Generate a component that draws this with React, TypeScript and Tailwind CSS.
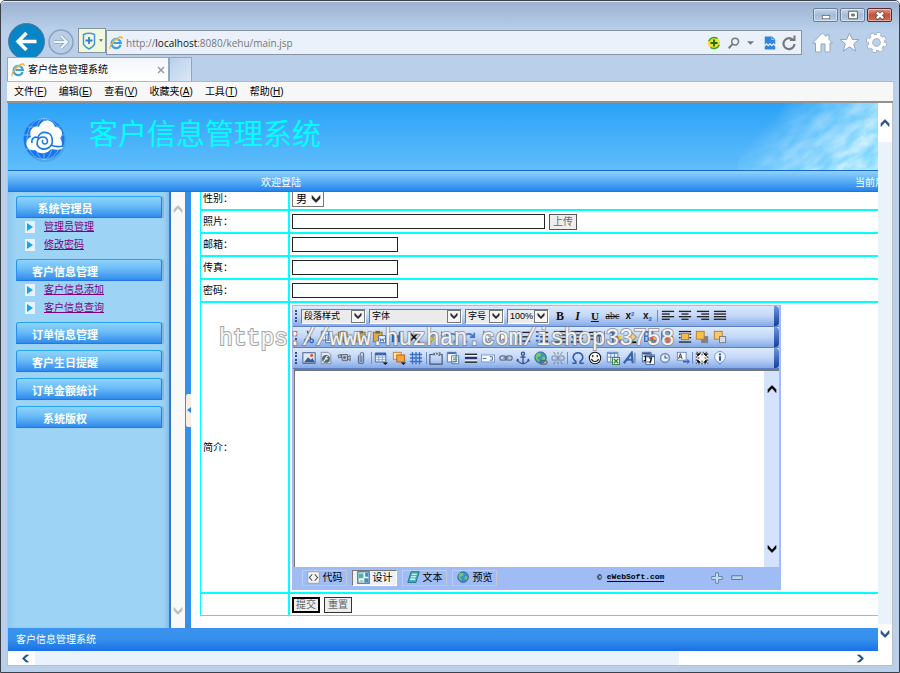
import React from "react";

type Kids = { children?: React.ReactNode };

const Svg = ({ children, className = "size-[14px]" }: Kids & { className?: string }) => (
  <svg viewBox="0 0 16 16" fill="none" className={className} aria-hidden="true">
    {children}
  </svg>
);

const Chevron = ({ dir, className }: { dir: "up" | "down" | "left" | "right"; className: string }) => {
  const d = {
    up: "M1 8.500L5 4L9 8.500V5.500L5 1.500L1 5.500Z",
    down: "M1 1.500L5 6L9 1.500V4.500L5 8.500L1 4.500Z",
    left: "M8.500 1L4 5L8.500 9H5.500L1.500 5L5.500 1Z",
    right: "M1.500 1L6 5L1.500 9H4.500L8.500 5L4.500 1Z",
  }[dir];
  return (
    <svg viewBox="0 0 10 10" className={className} aria-hidden="true">
      <path d={d} fill="currentColor" stroke="currentColor" strokeWidth=".6" />
    </svg>
  );
};

const IELogo = () => (
  <Svg className="size-[14px] shrink-0">
    <path d="M13.300 10.200A5.300 5.300 0 1 1 13.500 8H5" stroke="#3d9fdf" strokeWidth="2.500" />
    <path d="M11.500 4.500A5 5 0 0 0 3.500 7" stroke="#8ad3f7" strokeWidth="1" />
    <path d="M1.500 15C-.5 12.500 5 5.500 10 2.500c3-1.800 5.500-2 4.800.8" stroke="#f0b52c" strokeWidth="1.500" />
  </Svg>
);

/* ---------- toolbar drawings ---------- */
const lines = (a: number[][]) =>
  a.map(([x, y, w], i) => <rect key={i} x={x} y={y} width={w} height="1.500" fill="#222" />);

const clip = (
  <>
    <rect x="1.500" y="2.500" width="10" height="11" fill="#e0ab3c" stroke="#8d6a20" />
    <rect x="4" y="1" width="5" height="3" fill="#666" />
  </>
);
const cursor = <path d="M4 1v12l3-3 2 5 2-1-2-4h4z" fill="#fff" stroke="#6d7c99" />;
const palette = (
  <>
    <rect x="8" y="7" width="4" height="4" fill="#e64e3c" />
    <rect x="12" y="7" width="3" height="4" fill="#efc531" />
    <rect x="8" y="11" width="4" height="4" fill="#43a047" />
    <rect x="12" y="11" width="3" height="4" fill="#d23bd0" />
  </>
);
const grid = <path d="M4 1v14M8 1v14M12 1v14M1 4h14M1 8h14M1 12h14" stroke="#3a6fc4" strokeWidth="1.500" />;
const chain = (
  <g stroke="#68758a" strokeWidth="1.500">
    <rect x="1" y="5.500" width="7" height="5" rx="2.500" />
    <rect x="8" y="5.500" width="7" height="5" rx="2.500" />
    <path d="M5 8h6" />
  </g>
);
const globe = (
  <>
    <circle cx="7.500" cy="7.500" r="6.500" fill="#3f8fd0" stroke="#27598f" />
    <path d="M3 3c3-2 6 0 5 2s-4 1-4 3 3 2 2 4C2 11 1 6 3 3zM10 6l3 1-1 4-3-2z" fill="#6ccf5c" />
  </>
);

type Tool = [string, React.ReactNode] | null;

const row1: Tool[] = [
  ["加粗", <b className="font-['Liberation_Serif',serif] text-[12px] font-black">B</b>],
  ["斜体", <b className="font-['Liberation_Serif',serif] text-[12px] italic">I</b>],
  ["下划线", <b className="font-['Liberation_Serif',serif] text-[11px] underline">U</b>],
  ["删除线", <span className="font-['Liberation_Serif',serif] text-[10px] line-through">abc</span>],
  ["上标", <b className="text-[10px]">x<sup className="text-[6px] text-[#2c5fc0]">2</sup></b>],
  ["下标", <b className="text-[10px]">x<sub className="text-[6px] text-[#2c5fc0]">2</sub></b>],
  null,
  ["左对齐", <Svg>{lines([[1, 2, 14], [1, 5, 9], [1, 8, 14], [1, 11, 9]])}</Svg>],
  ["居中", <Svg>{lines([[1, 2, 14], [4, 5, 8], [1, 8, 14], [4, 11, 8]])}</Svg>],
  ["右对齐", <Svg>{lines([[1, 2, 14], [6, 5, 9], [1, 8, 14], [6, 11, 9]])}</Svg>],
  ["两端对齐", <Svg>{lines([[1, 2, 14], [1, 5, 14], [1, 8, 14], [1, 11, 14]])}</Svg>],
];

const row2: Tool[] = [
  ["剪切", <Svg><path d="M11 1L6 10M6 1l4 9" stroke="#444" strokeWidth="1.500" /><circle cx="5" cy="12.500" r="2" stroke="#2c5fc0" strokeWidth="1.500" /><circle cx="11" cy="12.500" r="2" stroke="#2c5fc0" strokeWidth="1.500" /></Svg>],
  ["复制", <Svg><path d="M1.500 1.500h8v10h-8zM6.500 5.500h8v9h-8z" fill="#fff" stroke="#3a63b0" /><path d="M8 8h5M8 10h5M8 12h5" stroke="#5e86d0" /></Svg>],
  ["粘贴", <Svg>{clip}<path d="M7.500 7.500h7v7h-7z" fill="#fff" stroke="#3a63b0" /></Svg>],
  ["粘贴文本", <Svg>{clip}<path d="M7.500 7.500h7v7h-7z" fill="#fff" stroke="#3a63b0" /><path d="M9 10h4M11 10v4" stroke="#222" /></Svg>],
  ["从Word粘贴", <Svg>{clip}<path d="M7.500 6.500h8v8h-8z" fill="#fff" stroke="#2c5fc0" /><path d="M9 9l1 4 1.500-3 1.500 3 1-4" stroke="#2c5fc0" /></Svg>],
  ["查找", <Svg><path d="M2 6l2-4h2v4h4V2h2l2 4v8H9V9H7v5H2z" fill="#3c5da4" /></Svg>],
  ["删除", <Svg><path d="M2 2l12 12M14 2L2 14" stroke="#111" strokeWidth="2" /></Svg>],
  ["格式刷", <Svg><path d="M10 1l4 3-5 5-3-3z" fill="#8b97ac" /><path d="M6 6l4 4-4 5H2z" fill="#e9c446" stroke="#a98320" /></Svg>],
  null,
  ["撤消", <Svg><path d="M2 3v5h5M3 8c2-5 10-5 10 1 0 2-1 4-3 5" stroke="#4477cc" strokeWidth="2" /></Svg>],
  ["重做", <Svg><path d="M14 3v5H9M13 8C11 3 3 3 3 9c0 2 1 4 3 5" stroke="#4477cc" strokeWidth="2" /></Svg>],
  ["全选", <Svg>{cursor}</Svg>],
  ["取消选择", <Svg>{cursor}</Svg>],
  null,
  ["编号", <Svg>{lines([[6, 2, 9], [6, 7, 9], [6, 12, 9]])}<path d="M2 1v4M2 6v4M2 11v4" stroke="#2c5fc0" strokeWidth="1.500" /></Svg>],
  ["项目符号", <Svg>{lines([[6, 2, 9], [6, 7, 9], [6, 12, 9]])}<path d="M1 2h3M1 7h3M1 12h3" stroke="#2c5fc0" strokeWidth="2" /></Svg>],
  ["增加缩进", <Svg>{lines([[1, 1, 14], [7, 5, 8], [7, 9, 8], [1, 13, 14]])}<path d="M1 5l4 3-4 3z" fill="#2c5fc0" /></Svg>],
  ["减少缩进", <Svg>{lines([[1, 1, 14], [7, 5, 8], [7, 9, 8], [1, 13, 14]])}<path d="M5 5L1 8l4 3z" fill="#2c5fc0" /></Svg>],
  ["段落", <Svg>{lines([[1, 2, 14], [1, 6, 14], [1, 10, 6]])}<path d="M10 8v7M13 8v7" stroke="#2c5fc0" strokeWidth="1.500" /></Svg>],
  null,
  ["文字颜色", <Svg><path d="M1 3h9M5.500 3v11" stroke="#3c62a8" strokeWidth="2" />{palette}</Svg>],
  ["背景颜色", <Svg><path d="M2 7l5-5 6 6-5 5z" fill="#f0cf86" stroke="#84652c" /><path d="M3 14h10" stroke="#111" strokeWidth="2" /></Svg>],
  ["边框颜色", <Svg><path d="M2 2h9v11H2zM2 7h9M6 2v11" stroke="#3464bd" strokeWidth="1.500" />{palette}</Svg>],
  ["底纹", <Svg><rect x="2" y="2" width="9" height="9" fill="#7ea3df" stroke="#335a9d" /><rect x="7" y="7" width="8" height="8" fill="#d96c45" /></Svg>],
  ["文字环绕", <Svg>{lines([[1, 1, 14], [1, 4, 2], [13, 4, 2], [1, 8, 2], [13, 8, 2], [1, 13, 14]])}<rect x="4" y="4" width="8" height="7" fill="#f2bd4d" stroke="#a87b20" /></Svg>],
  ["上移一层", <Svg><rect x="7" y="7" width="8" height="8" fill="#7d828b" /><rect x="1.500" y="1.500" width="9" height="9" fill="#f6bf51" stroke="#ae7c1b" /></Svg>],
  ["下移一层", <Svg><rect x="1.500" y="1.500" width="9" height="9" fill="#f6c96d" stroke="#ae7c1b" /><rect x="7.500" y="7.500" width="7" height="7" fill="#d5dae4" stroke="#70757f" /></Svg>],
];

const row3: Tool[] = [
  ["图片", <Svg><rect x="1" y="2" width="14" height="12" fill="#dfe9f8" stroke="#34507e" /><path d="M2 13l5-6 3 3 2-2 3 5z" fill="#395b90" /><circle cx="11" cy="5" r="1.800" fill="#e05b35" /></Svg>],
  ["Flash", <Svg><path d="M2.500 1.500h8l3 3v10h-11z" fill="#e4e9f2" stroke="#77859b" /><circle cx="8" cy="9" r="4.500" fill="#536b72" /><path d="M10 6c-3 0-2 5-5 6M7 9h3" stroke="#fff" strokeWidth="1.300" /></Svg>],
  ["媒体", <Svg><path d="M1 5l3-1 1 3-3 1zM5 4h7v7H6zM12 7l3-2v6l-3-2" fill="#b7c0cd" stroke="#56606e" /><circle cx="8.500" cy="7.500" r="1.500" fill="#56606e" /></Svg>],
  ["附件", <Svg><path d="M5 5v7c0 3 6 3 6 0V4c0-3-4-3-4 0v7c0 1 2 1 2 0V5" stroke="#65748c" strokeWidth="1.300" /></Svg>],
  null,
  ["表格", <Svg><path d="M1.500 2.500h12v10h-12z" fill="#fff" stroke="#315da5" /><path d="M1.500 3.500h12" stroke="#315da5" strokeWidth="3" /><path d="M5.500 3v9M9.500 3v9M1.500 7h12M1.500 10h12" stroke="#7699d1" /><path d="M10 13h6l-3 3z" fill="#111" /></Svg>],
  ["图层", <Svg><rect x="1.500" y="1.500" width="9" height="8" fill="#ffe4a5" stroke="#c07d22" /><rect x="5.500" y="4.500" width="9" height="8" fill="#f5a53b" stroke="#b25c18" /><path d="M10 13h6l-3 3z" fill="#111" /></Svg>],
  ["显示网格", <Svg>{grid}</Svg>],
  null,
  ["字段集", <Svg><path d="M5 4H1v11h14V4h-2" stroke="#4b5669" strokeWidth="1.300" /><path d="M5 2l2 3M7 2L5 5M8 2l1 2 1-2M11 2h2l-2 3h2" stroke="#333" strokeWidth=".8" /></Svg>],
  ["网页", <Svg><path d="M1.500 1.500h10v11h-10zM6.500 5.500h8v9h-8z" fill="#fff" stroke="#416caf" /><path d="M2 2.500h9" stroke="#416caf" strokeWidth="2" /><path d="M8 8h5M8 10h5M8 12h5" stroke="#549b4d" strokeWidth="1.300" /></Svg>],
  ["水平线", <Svg>{lines([[1, 3, 14], [1, 12, 14]])}<rect x="1" y="5" width="14" height="6" fill="#fff" /><path d="M1 8h14" stroke="#292e75" strokeWidth="3" /></Svg>],
  ["换行", <Svg><rect x=".5" y="4.500" width="15" height="8" fill="#f6f9ff" stroke="#7890b9" /><path d="M2 8.500h4M10 6.500h3v4h-3" stroke="#315da5" /></Svg>],
  ["超链接", <Svg>{chain}</Svg>],
  ["锚点", <Svg><circle cx="8" cy="3" r="1.800" stroke="#314f8a" strokeWidth="1.500" /><path d="M8 5v9M5 7h6M2 9c0 7 12 7 12 0M2 9l-1 3M14 9l1 3" stroke="#314f8a" strokeWidth="1.500" /></Svg>],
  ["网络链接", <Svg>{globe}<rect x="7" y="11" width="8" height="4" rx="2" stroke="#566" strokeWidth="1.300" /></Svg>],
  ["取消链接", <Svg><g opacity=".6">{chain}</g><path d="M3 1l2 3M8 1v3M13 1l-2 3M3 15l2-3M8 15v-3M13 15l-2-3" stroke="#777" /></Svg>],
  null,
  ["特殊符号", <Svg><path d="M1.500 14h4v-2C0 8 3 2 8 2s8 6 2.500 10v2h4" stroke="#315da5" strokeWidth="1.800" /></Svg>],
  ["表情", <Svg><circle cx="8" cy="8" r="6.500" fill="#fff" stroke="#111" strokeWidth="1.200" /><path d="M4 9c1 4 7 4 8 0M5.500 4.500v2.500M10.500 4.500v2.500" stroke="#111" strokeWidth="1.300" /></Svg>],
  ["Excel", <Svg><path d="M1.500 1.500h12v11h-12z" fill="#fff" stroke="#4678c0" /><path d="M2 3h11M5.500 2v10M9.500 2v10M2 7h11" stroke="#4678c0" /><rect x="7.500" y="7.500" width="8" height="8" fill="#e8f7e3" stroke="#317b36" /><path d="M9 9l5 5M14 9l-5 5" stroke="#317b36" strokeWidth="1.500" /></Svg>],
  ["艺术字", <Svg><path d="M1 14L10 2l1 12M4 10h7" stroke="#3265ae" strokeWidth="2.500" /><path d="M13.500 2v12" stroke="#8199bf" strokeWidth="2" /></Svg>],
  ["日期", <Svg><path d="M1.500 1.500h10v11h-10zM5.500 4.500h10v11h-10z" fill="#fff" stroke="#3c5c91" /><path d="M2 3h9M6 6h9" stroke="#3c5c91" strokeWidth="2" /><path d="M9 8h3l-2 6M3 6h2v5H3" stroke="#111" strokeWidth="1.300" /></Svg>],
  ["时间", <Svg><circle cx="8" cy="8" r="5" fill="#eaf1fd" stroke="#7c94bc" strokeWidth="1.800" /><path d="M8 5v3h3" stroke="#315da5" strokeWidth="1.300" /></Svg>],
  ["自动替换", <Svg><rect x="1.500" y="1.500" width="10" height="9" fill="#fff" stroke="#5b7fba" /><path d="M3 9l2-6 2 6M4 7h2" stroke="#222" /><path d="M8 11h5v-2l3 3-3 3v-2H8z" fill="#3766b8" /></Svg>],
  null,
  ["全屏", <Svg><rect x="1.500" y="1.500" width="13" height="13" fill="#f4f5f7" stroke="#333" strokeDasharray="2 1.500" /><path d="M3 6V3h3zM10 3h3v3zM3 10v3h3zM13 10v3h-3zM8 3v2M8 11v2M3 8h2M11 8h2" fill="#111" stroke="#111" /></Svg>],
  ["关于", <Svg><path d="M8 .500a6.300 6.300 0 0 1 1 12.500L8 15.500l-1-2.500A6.300 6.300 0 0 1 8 .500z" fill="#eff6ff" stroke="#6c91be" /><path d="M8 6v5" stroke="#1e4d9b" strokeWidth="2.200" /><circle cx="8" cy="3.800" r="1.200" fill="#1e4d9b" /></Svg>],
];

const Tools = ({ items }: { items: Tool[] }) => (
  <div className="flex min-w-0 flex-1 items-center justify-between">
    {items.map((t, i) =>
      t === null ? (
        <span key={i} className="h-3 w-px bg-[#6a8ccb]" />
      ) : (
        <button key={i} type="button" aria-label={t[0]} className="flex h-4 w-4 shrink-0 items-center justify-center leading-none text-[#111]">
          {t[1]}
        </button>
      ),
    )}
  </div>
);

const Bar = ({ children }: Kids) => (
  <div className="flex h-[21px] w-[486px] border-b border-[#5d80c4] bg-linear-to-b from-[#dde9fd] via-[#c2d7f8] to-[#86aae6]">
    <div className="my-1 mr-1 ml-[2px] w-0 border-l-2 border-dotted border-[#2f4f94]" />
    <div className="flex w-[427px] items-center gap-[3px]">{children}</div>
    <div className="ml-auto w-[5px] rounded-r-sm bg-linear-to-b from-[#6f95dc] to-[#123f9b]" />
  </div>
);

const ToolSelect = ({ label, width }: { label: string; width: string }) => (
  <div className={`grid h-[15px] shrink-0 border border-[#777] border-r-white border-b-white bg-[#ebebeb] ${width}`}>
    <select aria-label={label} className="w-full appearance-none pl-[2px] text-[9px] leading-[13px] text-black [grid-area:1/1]">
      <option>{label}</option>
    </select>
    <span className="pointer-events-none flex w-[14px] items-center justify-center justify-self-end border border-[#777] bg-[#f5f5f5] [grid-area:1/1]">
      <Chevron dir="down" className="size-[8px] text-[#222]" />
    </span>
  </div>
);

/* ---------- sidebar ---------- */
const groups: { title: string; links: string[] }[] = [
  { title: "系统管理员", links: ["管理员管理", "修改密码"] },
  { title: "客户信息管理", links: ["客户信息添加", "客户信息查询"] },
  { title: "订单信息管理", links: [] },
  { title: "客户生日提醒", links: [] },
  { title: "订单金额统计", links: [] },
  { title: "系统版权", links: [] },
];

const Sidebar = () => (
  <nav className="flex w-[163px] shrink-0 flex-col gap-[6px] border-r-2 border-[#2f7ccb] bg-linear-to-r from-[#8fc8f0] via-[#9dd3f5] via-5% to-[#9dd3f5] pt-1 pl-2 shadow-[inset_-4px_0_4px_-2px_#7fb8e0]">
    {groups.map((g) => (
      <div key={g.title}>
        <button
          type="button"
          className="block h-[22px] w-[146px] rounded-t-[3px] border border-t-[#23a5f0] border-r-[#2583e2] border-b-[#1f78e6] border-l-[#2a8ff0] bg-linear-to-b from-[#8fd3fb] via-[#6abcf7] via-45% to-[#2f8aec] pt-[4px] pr-12 text-center text-[11px] leading-4 font-bold text-white shadow-[2px_0_1px_#84b4dc]"
        >
          {g.title}
        </button>
        {g.links.length > 0 && (
          <ul className="-mb-px">
            {g.links.map((l) => (
              <li key={l} className="flex h-[18px] items-center gap-[9px] pl-[9px]">
                <span className="flex h-3 w-[10px] items-center justify-center bg-[#e6f3fb]">
                  <svg viewBox="0 0 6 8" className="h-2 w-[6px]" aria-hidden="true"><path d="M0 0l6 4-6 4z" fill="#1aa5e8" /></svg>
                </span>
                <a href="#" className="text-[10px] leading-3 text-[#800080] underline">{l}</a>
              </li>
            ))}
          </ul>
        )}
      </div>
    ))}
  </nav>
);

/* ---------- form ---------- */
const Row = ({ label, id, children, className }: Kids & { label?: string; id?: string; className: string }) => (
  <div className={`flex border-[#00ffff] ${className}`}>
    <div className="flex w-[89px] shrink-0 items-center border-r-2 border-[#00ffff] pl-[2px]">
      {label && <label htmlFor={id} className="text-[10px] leading-3">{label}</label>}
    </div>
    <div className="flex min-w-0 flex-1 items-center gap-1 pl-[2px]">{children}</div>
  </div>
);

const TextBox = ({ id, type = "text" }: { id: string; type?: string }) => (
  <input id={id} type={type} className="h-[15px] w-[106px] border border-[#222] bg-white px-1 text-[10px]" />
);

const Editor = () => (
  <div className="w-[489px] bg-[#a0bcf4] px-px">
    <div className="flex flex-col pt-px">
      <Bar>
        <ToolSelect label="段落样式" width="w-[65px]" />
        <ToolSelect label="字体" width="w-[93px]" />
        <ToolSelect label="字号" width="w-[39px]" />
        <ToolSelect label="100%" width="w-[42px]" />
        <Tools items={row1} />
      </Bar>
      <Bar><Tools items={row2} /></Bar>
      <Bar><Tools items={row3} /></Bar>
    </div>
    <div className="mx-px flex h-[198px] border-t-2 border-l border-[#777] bg-white">
      <textarea id="intro" className="flex-1 resize-none bg-white p-1 text-[10px] outline-none" />
      <div className="flex w-[15px] flex-col items-center justify-between bg-[#d5e2fb] py-[13px] text-black">
        <Chevron dir="up" className="size-[10px]" />
        <Chevron dir="down" className="size-[10px]" />
      </div>
    </div>
    <div className="flex h-[23px] items-center gap-[5px] pb-[2px] pl-[9px] text-[11px] leading-none">
      {[
        ["代码", <><rect x="1" y="1" width="14" height="14" fill="#f6f6f6" stroke="#999" /><path d="M6.500 4L3 8l3.500 4M9.500 4L13 8l-3.500 4" stroke="#444" strokeWidth="1.300" /></>],
        ["设计", <><rect x="1" y="1" width="14" height="14" fill="#fff" stroke="#2870a5" strokeWidth="1.500" /><path d="M2 3h6v6H2z" fill="#4bb5aa" /><path d="M9 9h5v5H9zM10 2h4v5h-4z" fill="#4389d1" /><path d="M3 11h5v3H3z" fill="#b6d69c" /></>],
        ["文本", <><path d="M5 1h10l-4 13H1z" fill="#41b8bd" stroke="#17626c" /><path d="M6 4h6M5 7h6M4 10h6" stroke="#fff" strokeWidth="1.300" /></>],
        ["预览", globe],
      ].map(([t, icon], i) => (
        <button
          key={i}
          type="button"
          className={`flex h-4 w-[45px] items-center justify-center gap-[3px] border ${
            i === 1 ? "border-t-[#777] border-r-white border-b-white border-l-[#777] bg-[#f0f0f0]" : "border-t-[#b9cff9] border-r-[#c3c7cf] border-b-[#c3c7cf] border-l-[#b9cff9]"
          }`}
        >
          <Svg className="size-[13px] shrink-0">{icon}</Svg>
          <span className="text-[10px]">{t}</span>
        </button>
      ))}
      <span className="ml-[95px] font-['Liberation_Mono',monospace] text-[8px] font-bold">©</span>
      <a href="#" className="border-b border-black font-['Liberation_Mono',monospace] text-[8px] leading-[8px] font-bold">eWebSoft.com</a>
      <button type="button" aria-label="增高" className="ml-[42px]">
        <Svg className="size-3"><path d="M6 1h4v5h5v4h-5v5H6v-5H1V6h5z" fill="#c1ddf1" stroke="#6985a5" strokeWidth="1.300" /></Svg>
      </button>
      <button type="button" aria-label="减低" className="ml-[3px]">
        <Svg className="size-3"><path d="M1 5h14v5H1z" fill="#b6d5ee" stroke="#66758a" strokeWidth="1.300" /></Svg>
      </button>
    </div>
  </div>
);

const FormPane = () => (
  <form className="min-w-0 flex-1 overflow-hidden bg-white pb-3 pl-[9px]" onSubmit={(e) => e.preventDefault()}>
    <div className="relative border-l border-[#00ffff]">
      <Row label="性别：" id="sex" className="h-[19px] border-b-2 [&>div]:pb-[3px]">
        <div className="grid h-[15px] w-[32px] border border-t-0 border-[#777]">
          <select id="sex" className="appearance-none pl-[3px] text-[11px] leading-3 [grid-area:1/1]">
            <option>男</option>
            <option>女</option>
          </select>
          <Chevron dir="down" className="pointer-events-none mr-[2px] size-[10px] self-center justify-self-end text-[#222] [grid-area:1/1]" />
        </div>
      </Row>
      <Row label="照片：" id="photo" className="h-[23px] border-b-2">
        <input id="photo" type="text" className="h-[15px] w-[253px] border border-[#222] bg-white px-1 text-[10px]" />
        <button type="button" className="h-4 w-7 border border-[#555] bg-[#eee] text-[10px] leading-3 text-[#666]">上传</button>
      </Row>
      <Row label="邮箱：" id="mail" className="h-[23px] border-b-2"><TextBox id="mail" /></Row>
      <Row label="传真：" id="fax" className="h-[23px] border-b-2"><TextBox id="fax" /></Row>
      <Row label="密码：" id="pwd" className="h-[23px] border-b-2"><TextBox id="pwd" type="password" /></Row>
      <Row label="简介：" id="intro" className="border-b-2 [&>div+div]:py-[2px]"><Editor /></Row>
      <Row className="h-[22px] border-b">
        <button type="submit" className="h-4 w-7 border-2 border-black bg-[#eee] text-[10px] leading-3 text-[#666]">提交</button>
        <button type="reset" className="h-4 w-7 border border-[#333] bg-[#eee] text-[10px] leading-3 text-[#666]">重置</button>
      </Row>
      <div className="pointer-events-none absolute top-[133px] left-[18px] font-['Liberation_Mono',monospace] text-[23px] leading-[28px] whitespace-nowrap text-white/90 [-webkit-text-stroke:2px_#868686c0] [paint-order:stroke_fill]">
        https://www.huzhan.com/ishop33758
      </div>
    </div>
  </form>
);

const Banner = () => (
  <header className="flex h-[67px] bg-linear-to-b from-[#27a2f7] to-[#5fbdfb]">
    <svg viewBox="0 0 46 46" className="mt-[14px] ml-[13px] size-[46px] shrink-0" aria-label="标志">
      <circle cx="24" cy="24" r="21" fill="#4a9be0" opacity=".6" />
      <circle cx="23" cy="22" r="20.500" fill="#1677ec" />
      <g fill="none" stroke="#8fc8fa" strokeWidth=".7">
        <ellipse cx="23" cy="22" rx="9" ry="20.500" />
        <ellipse cx="23" cy="22" rx="17" ry="20.500" />
        <path d="M23 2v41M3 18h40M5 32h36M7 10h32" />
      </g>
      <path d="M14 33C5 35 2 23 10 20c-3-8 4-12 8-10 3-9 14-8 16 0 7 0 9 7 5 11 3 4 1 8 3 10-5 3-9 1-12 1-5 6-12 5-16 1z" fill="#fff" />
      <path d="M11 26c-1-5 3-7 6-5 1-8 13-7 14 0 2 9-6 13-12 10-5-3-3-11 3-11 5 0 6 7 2 7-3 0-3-3-2-4M30 28c4 2 8 2 12 1" fill="none" stroke="#1a78e4" strokeWidth="1.600" />
    </svg>
    <h1 className="mt-[14px] ml-[22px] text-[29px] leading-9 font-normal whitespace-nowrap text-[#00ffff]">客户信息管理系统</h1>
    <svg viewBox="0 0 140 67" preserveAspectRatio="none" className="ml-auto h-full w-[140px] shrink-0" aria-hidden="true">
      <defs>
        <linearGradient id="fade" gradientUnits="userSpaceOnUse" x1="40" y1="5" x2="105" y2="62">
          <stop offset="0" stopColor="#fff" stopOpacity="0" />
          <stop offset=".45" stopColor="#fff" stopOpacity=".5" />
          <stop offset="1" stopColor="#fff" stopOpacity=".95" />
        </linearGradient>
        <mask id="soft"><rect width="140" height="67" fill="url(#fade)" /></mask>
        <filter id="cloud" x="0" y="0" width="1" height="1">
          <feTurbulence type="fractalNoise" baseFrequency=".05 .12" numOctaves="4" seed="4" />
          <feColorMatrix values="0 0 0 0 .75  0 0 0 0 .94  0 0 0 0 1  1.500 0 0 0 -.3" />
        </filter>
      </defs>
      <g mask="url(#soft)">
        <rect width="140" height="67" fill="#84d8ff" />
        <g transform="rotate(-35 70 33)"><rect x="-20" y="-50" width="200" height="170" filter="url(#cloud)" /></g>
      </g>
    </svg>
  </header>
);

const menus = [["文件", "F"], ["编辑", "E"], ["查看", "V"], ["收藏夹", "A"], ["工具", "T"], ["帮助", "H"]];

const WinButton = ({ label, children, red }: Kids & { label: string; red?: boolean }) => (
  <button
    type="button"
    aria-label={label}
    className={`flex h-[14px] w-[25px] items-center justify-center rounded-[2px] border shadow-[inset_0_0_0_1px_#ffffff66] ${
      red ? "border-[#5a2a30] bg-linear-to-b from-[#e09a8c] via-[#c4503c] to-[#cf705a]" : "border-[#6a7f9c] bg-linear-to-b from-[#c6d6ea] via-[#a5bbd6] to-[#b8cde6]"
    }`}
  >
    <Svg className="size-[10px]">{children}</Svg>
  </button>
);

export default function App() {
  return (
    <div className="flex min-h-screen flex-col rounded-t-[5px] border border-[#3b4149] bg-[#bad0ea] font-['Liberation_Sans','Noto_Sans_CJK_SC',sans-serif] text-black">
      {/* window frame and address bar */}
      <div className="flex h-[29px] justify-end gap-[2px] rounded-t-[4px] border-t border-[#e3ebf5] bg-linear-to-b from-[#9cb2d0] to-[#b8d0ea] pt-[6px] pr-[7px]">
        <WinButton label="最小化"><rect x="2" y="9" width="12" height="5" fill="#fff" stroke="#555" /></WinButton>
        <WinButton label="最大化"><path d="M1 2h14v12H1zM6 6.500h4v3H6z" fill="#fff" fillRule="evenodd" stroke="#555" strokeWidth="1.500" /></WinButton>
        <WinButton label="关闭" red><path d="M2 3l12 11M14 3L2 14" stroke="#555" strokeWidth="6" /><path d="M3 4l10 9M13 4L3 13" stroke="#fff" strokeWidth="4" /></WinButton>
      </div>
      <div className="-mt-[7px] flex h-[37px] items-end pr-3 pl-[7px]">
        <button type="button" aria-label="后退" className="size-[37px] shrink-0">
          <svg viewBox="0 0 37 37" aria-hidden="true">
            <circle cx="18.500" cy="18.500" r="18" fill="#0785c6" stroke="#58788f" />
            <path d="M28.500 18.500H11M18.500 10L10 18.500l8.500 8.500" fill="none" stroke="#fff" strokeWidth="3.500" />
          </svg>
        </button>
        <button type="button" aria-label="前进" className="mb-[5px] ml-[3px] size-[26px] shrink-0">
          <svg viewBox="0 0 26 26" aria-hidden="true">
            <circle cx="13" cy="13" r="12" fill="#b9cee6" stroke="#8ba0bb" strokeWidth="1.500" />
            <path d="M6 13h13M13 7l6 6-6 6" fill="none" stroke="#8fa4bf" strokeWidth="3.500" />
            <path d="M6 13h13M13 7l6 6-6 6" fill="none" stroke="#eef4fb" strokeWidth="2" />
          </svg>
        </button>
        <button type="button" aria-label="安全" className="mb-[7px] ml-1 flex h-[25px] w-7 shrink-0 items-center justify-center gap-[3px] border border-[#8a949e] bg-[#f0f9dc]">
          <svg viewBox="0 0 14 18" className="h-[18px] w-[14px]" fill="none" aria-hidden="true">
            <path d="M1.500 2.500Q7 0 12.500 2.500V12Q12 14 7 17Q2 14 1.500 12Z" stroke="#4b94e6" strokeWidth="1.500" />
            <path d="M7 5v7M3.500 8.500h7" stroke="#2f80de" strokeWidth="1.800" />
          </svg>
          <svg viewBox="0 0 6 4" className="h-[3px] w-1" aria-hidden="true"><path d="M0 0h6L3 4z" fill="#667" /></svg>
        </button>
        <div className="mb-[5px] flex h-[25px] min-w-0 flex-1 items-center gap-[9px] border border-[#8794a6] bg-[#eaf1fa] pr-1 pl-[2px]">
          <div className="flex min-w-0 flex-1 items-center gap-[3px]">
            <IELogo />
            <span className="truncate font-['Open_Sans',sans-serif] text-[10px] leading-4 text-[#777]">
              http://<span className="text-[#111]">localhost</span>:8080/kehu/main.jsp
            </span>
          </div>
          <button type="button" aria-label="添加"><Svg><circle cx="8" cy="8" r="7" fill="#f6df2a" /><path d="M2 6A6.500 6.500 0 0 1 12 3M14 10a6.500 6.500 0 0 1-10 3" stroke="#3aa43c" strokeWidth="1.800" /><path d="M8 4v8M4 8h8" stroke="#17701c" strokeWidth="2.200" /></Svg></button>
          <button type="button" aria-label="搜索" className="-ml-[2px]"><Svg className="size-3"><circle cx="9.500" cy="6" r="4.500" stroke="#777" strokeWidth="2" /><path d="M6 9.500L1 15" stroke="#777" strokeWidth="2.500" /></Svg></button>
          <svg viewBox="0 0 8 4" className="-ml-[2px] h-1 w-[7px]" aria-hidden="true"><path d="M0 0h8L4 4z" fill="#777" /></svg>
          <button type="button" aria-label="兼容性视图"><Svg><path d="M2 .500h8.500l3.500 3.500v6l-2-2-2 2-2-2-2 2-2-2-2 2zM2 12l2-2 2 2 2-2 2 2 2-2 2 2v3.500H2z" fill="#2f86da" /><path d="M10 1v3h3" stroke="#a5d0f5" /></Svg></button>
          <button type="button" aria-label="刷新" className="-ml-[5px]"><Svg className="size-4"><path d="M12.500 5.500A5.500 5.500 0 1 0 13.500 9" stroke="#777" strokeWidth="2.200" /><path d="M9 5h4.500V.5" stroke="#777" strokeWidth="2" /></Svg></button>
        </div>
        <div className="mb-[7px] ml-[10px] flex gap-[6px]">
          <button type="button" aria-label="主页"><svg viewBox="0 0 21 21" className="size-[21px]" aria-hidden="true"><path d="M.5 11L10.500 1l3.500 3.500V3h3v4.500l3.500 3.500H18v9h-5v-8H9v8H3.500v-9z" fill="#fff" stroke="#93a6bf" /></svg></button>
          <button type="button" aria-label="收藏"><svg viewBox="0 0 21 21" className="size-[21px]" aria-hidden="true"><path d="M10.500 1l2.800 6.500H20l-5.300 4.400 2 7.300-6.200-4.400-6.200 4.400 2-7.300L1 7.500h6.700z" fill="#fff" stroke="#93a6bf" /></svg></button>
          <button type="button" aria-label="工具">
            <svg viewBox="0 0 21 21" className="size-[21px]" fill="none" aria-hidden="true">
              <circle cx="10.500" cy="10.500" r="8" stroke="#93a6bf" strokeWidth="5" strokeDasharray="4 2.283" />
              <circle cx="10.500" cy="10.500" r="6" stroke="#93a6bf" strokeWidth="5" />
              <circle cx="10.500" cy="10.500" r="8" stroke="#fff" strokeWidth="3.500" strokeDasharray="3.200 3.083" strokeDashoffset="-.4" />
              <circle cx="10.500" cy="10.500" r="6" stroke="#fff" strokeWidth="3.500" />
            </svg>
          </button>
        </div>
      </div>
      {/* tabs */}
      <div className="relative -mt-[3px] ml-[6px] flex h-6">
        <div className="flex w-[162px] items-center gap-[3px] border border-b-0 border-[#95a5ba] bg-linear-to-b from-[#f2f7fc] to-white pr-[2px] pl-[3px]">
          <IELogo />
          <span className="flex-1 text-[10px]">客户信息管理系统</span>
          <button type="button" aria-label="关闭标签" className="p-px"><Svg className="size-2"><path d="M2 2l12 12M14 2L2 14" stroke="#9a9a9a" strokeWidth="3" /></Svg></button>
        </div>
        <button type="button" aria-label="新建标签" className="w-[23px] border border-b-0 border-[#95a5ba] bg-linear-to-br from-[#b9d0ea] to-[#dbe8f6]" />
      </div>
      {/* menu bar */}
      <div className="mx-[6px] flex h-[22px] items-center gap-3 border-t border-b-2 border-t-[#a7bbd3] border-b-[#929292] bg-[#f7f7f7] pl-[7px]">
        {menus.map(([t, k]) => (
          <button key={k} type="button" className="text-[10px] leading-3">{t}(<u>{k}</u>)</button>
        ))}
      </div>

      {/* page with its scroll bars */}
      <div className="mx-[6px] mb-[6px] flex flex-1 border-x border-b border-[#bcc0c8] bg-white">
        <div className="flex min-w-0 flex-1 flex-col">
          <Banner />
          <div className="flex h-[22px] items-center overflow-hidden border-t border-b border-t-[#1769c8] border-b-[#2672cf] bg-linear-to-b from-[#8fd2fd] via-[#58aef6] via-50% to-[#2484ec] text-[10px] leading-3 text-white">
            <span className="mt-[3px] ml-[253px]">欢迎登陆</span>
            <span className="mt-[3px] ml-auto w-[23px] overflow-hidden whitespace-nowrap">当前用</span>
          </div>
          <div className="flex flex-1">
            <Sidebar />
            <div className="flex w-[14px] shrink-0 flex-col items-center justify-between bg-[#f9f9f9] pt-3 pb-3 text-[#bcbcbc]">
              <Chevron dir="up" className="size-[10px]" />
              <Chevron dir="down" className="size-[10px]" />
            </div>
            <div className="flex w-[6px] shrink-0 items-center bg-[#3391ee]">
              <button type="button" aria-label="收起菜单" className="ml-px flex h-[33px] w-[5px] items-center justify-center rounded-l-[2px] bg-[#f7efe4]">
                <svg viewBox="0 0 4 6" className="h-[6px] w-1" aria-hidden="true"><path d="M4 0v6L0 3z" fill="#2b86e6" /></svg>
              </button>
            </div>
            <FormPane />
          </div>
          <footer className="flex h-[23px] items-center bg-linear-to-b from-[#3a94ee] via-[#348eec] via-50% to-[#1a70e6] pl-2 text-[10px] text-white">客户信息管理系统</footer>
          <div className="flex h-[14px] items-center text-[#1f4f8c]">
            <div className="flex w-[27px] justify-end pr-[5px]"><Chevron dir="left" className="size-[9px]" /></div>
            <div className="h-full w-[74%] bg-[#eaf2fb]" />
            <Chevron dir="right" className="mr-[13px] ml-auto size-[9px]" />
          </div>
        </div>
        <div className="flex w-[14px] shrink-0 flex-col items-center text-[#1f4f8c]">
          <div className="flex h-[39px] items-center"><Chevron dir="up" className="size-[10px]" /></div>
          <div className="w-full flex-1 bg-[#eaf2fb]" />
          <div className="h-[41px] pt-[5px]"><Chevron dir="down" className="size-[10px]" /></div>
        </div>
      </div>
    </div>
  );
}
